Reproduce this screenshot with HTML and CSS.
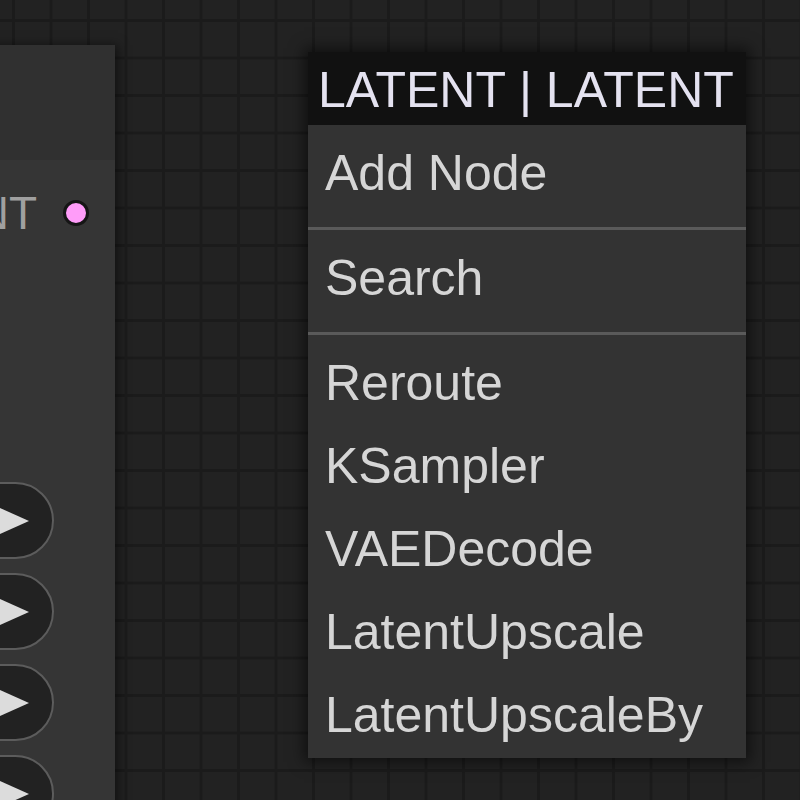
FILE: index.html
```html
<!DOCTYPE html>
<html lang="en">
<head>
    <meta charset="UTF-8">
    <meta name="viewport" content="width=device-width, initial-scale=1.0">
    <title>Graph canvas - context menu</title>
    <link rel="stylesheet" href="styles.css">
</head>
<body>

    <div class="canvas">

        <!-- node partly off screen on the left -->
        <div class="node">
            <div class="node-title"></div>
            <div class="node-body">
                <div class="slot">
                    <span class="slot-label">LATENT</span>
                    <span class="slot-dot"></span>
                </div>
                <div class="widgets">
                    <div class="widget"><span class="arrow"></span></div>
                    <div class="widget"><span class="arrow"></span></div>
                    <div class="widget"><span class="arrow"></span></div>
                    <div class="widget"><span class="arrow"></span></div>
                </div>
            </div>
        </div>

        <div class="context-menu">
            <div class="menu-title">LATENT | LATENT</div>
            <div class="menu-body">
                <div class="menu-item">Add Node</div>
                <div class="menu-sep"></div>
                <div class="menu-item">Search</div>
                <div class="menu-sep"></div>
                <div class="menu-item">Reroute</div>
                <div class="menu-item">KSampler</div>
                <div class="menu-item">VAEDecode</div>
                <div class="menu-item">LatentUpscale</div>
                <div class="menu-item">LatentUpscaleBy</div>
            </div>
        </div>

    </div>

</body>
</html>
```

FILE: styles.css
```css
body { margin: 0; font-family: "Liberation Sans", Arial, sans-serif; }

.canvas {
    position: relative;
    width: 800px;
    height: 800px;
    overflow: hidden;
    background-color: #222;
    background-image:
        linear-gradient(to right, #1b1b1b 3px, transparent 3px),
        linear-gradient(to bottom, #1b1b1b 3px, transparent 3px);
    background-size: 37.5px 37.5px;
    background-position: 12px 19px;
}

/* node */
.node {
    position: absolute;
    left: -60px;
    top: 45px;
    width: 175px;
    height: 800px;
    background: #353535;
    box-shadow: 3px 0 10px rgba(0, 0, 0, 0.5);
}
.node-title { height: 115px; background: #303030; }
.node-body { display: flex; flex-direction: column; }

.slot { display: flex; align-items: center; justify-content: flex-end; height: 106px; padding-right: 26px; }
.slot-label { color: #a0a0a0; font-size: 46px; margin-right: 26px; white-space: nowrap; }
.slot-dot { flex-shrink: 0; width: 20px; height: 20px; border-radius: 50%; background: #ff9cf9; border: 3px solid #151515; }

.widgets { display: flex; flex-direction: column; gap: 14px; margin-top: 216px; }
.widget {
    width: 110px;
    height: 73px;
    border-radius: 40px;
    background: #222;
    border: 2px solid #5c5c5c;
    display: flex;
    align-items: center;
    justify-content: flex-end;
    padding-right: 23px;
    box-sizing: content-box;
    margin-left: -23px;
}
.arrow {
    width: 0; height: 0;
    border-top: 16px solid transparent;
    border-bottom: 16px solid transparent;
    border-left: 36px solid #dcdcdc;
}

/* context menu */
.context-menu {
    position: absolute;
    left: 308px;
    top: 52px;
    width: 438px;
    box-shadow: 0 0 14px 4px rgba(0, 0, 0, 0.55);
}
.menu-title {
    background: #111;
    color: #e4e2f0;
    font-size: 50px;
    line-height: 69px;
    padding: 4px 0 0 10px;
}
.menu-body { background: #333; padding-bottom: 8px; }
.menu-item {
    color: #d6d6d6;
    font-size: 50px;
    line-height: 69px;
    padding: 14px 0 0 17px;
}
.menu-sep { height: 3px; background: #5a5a5a; margin-top: 19px; }
```
